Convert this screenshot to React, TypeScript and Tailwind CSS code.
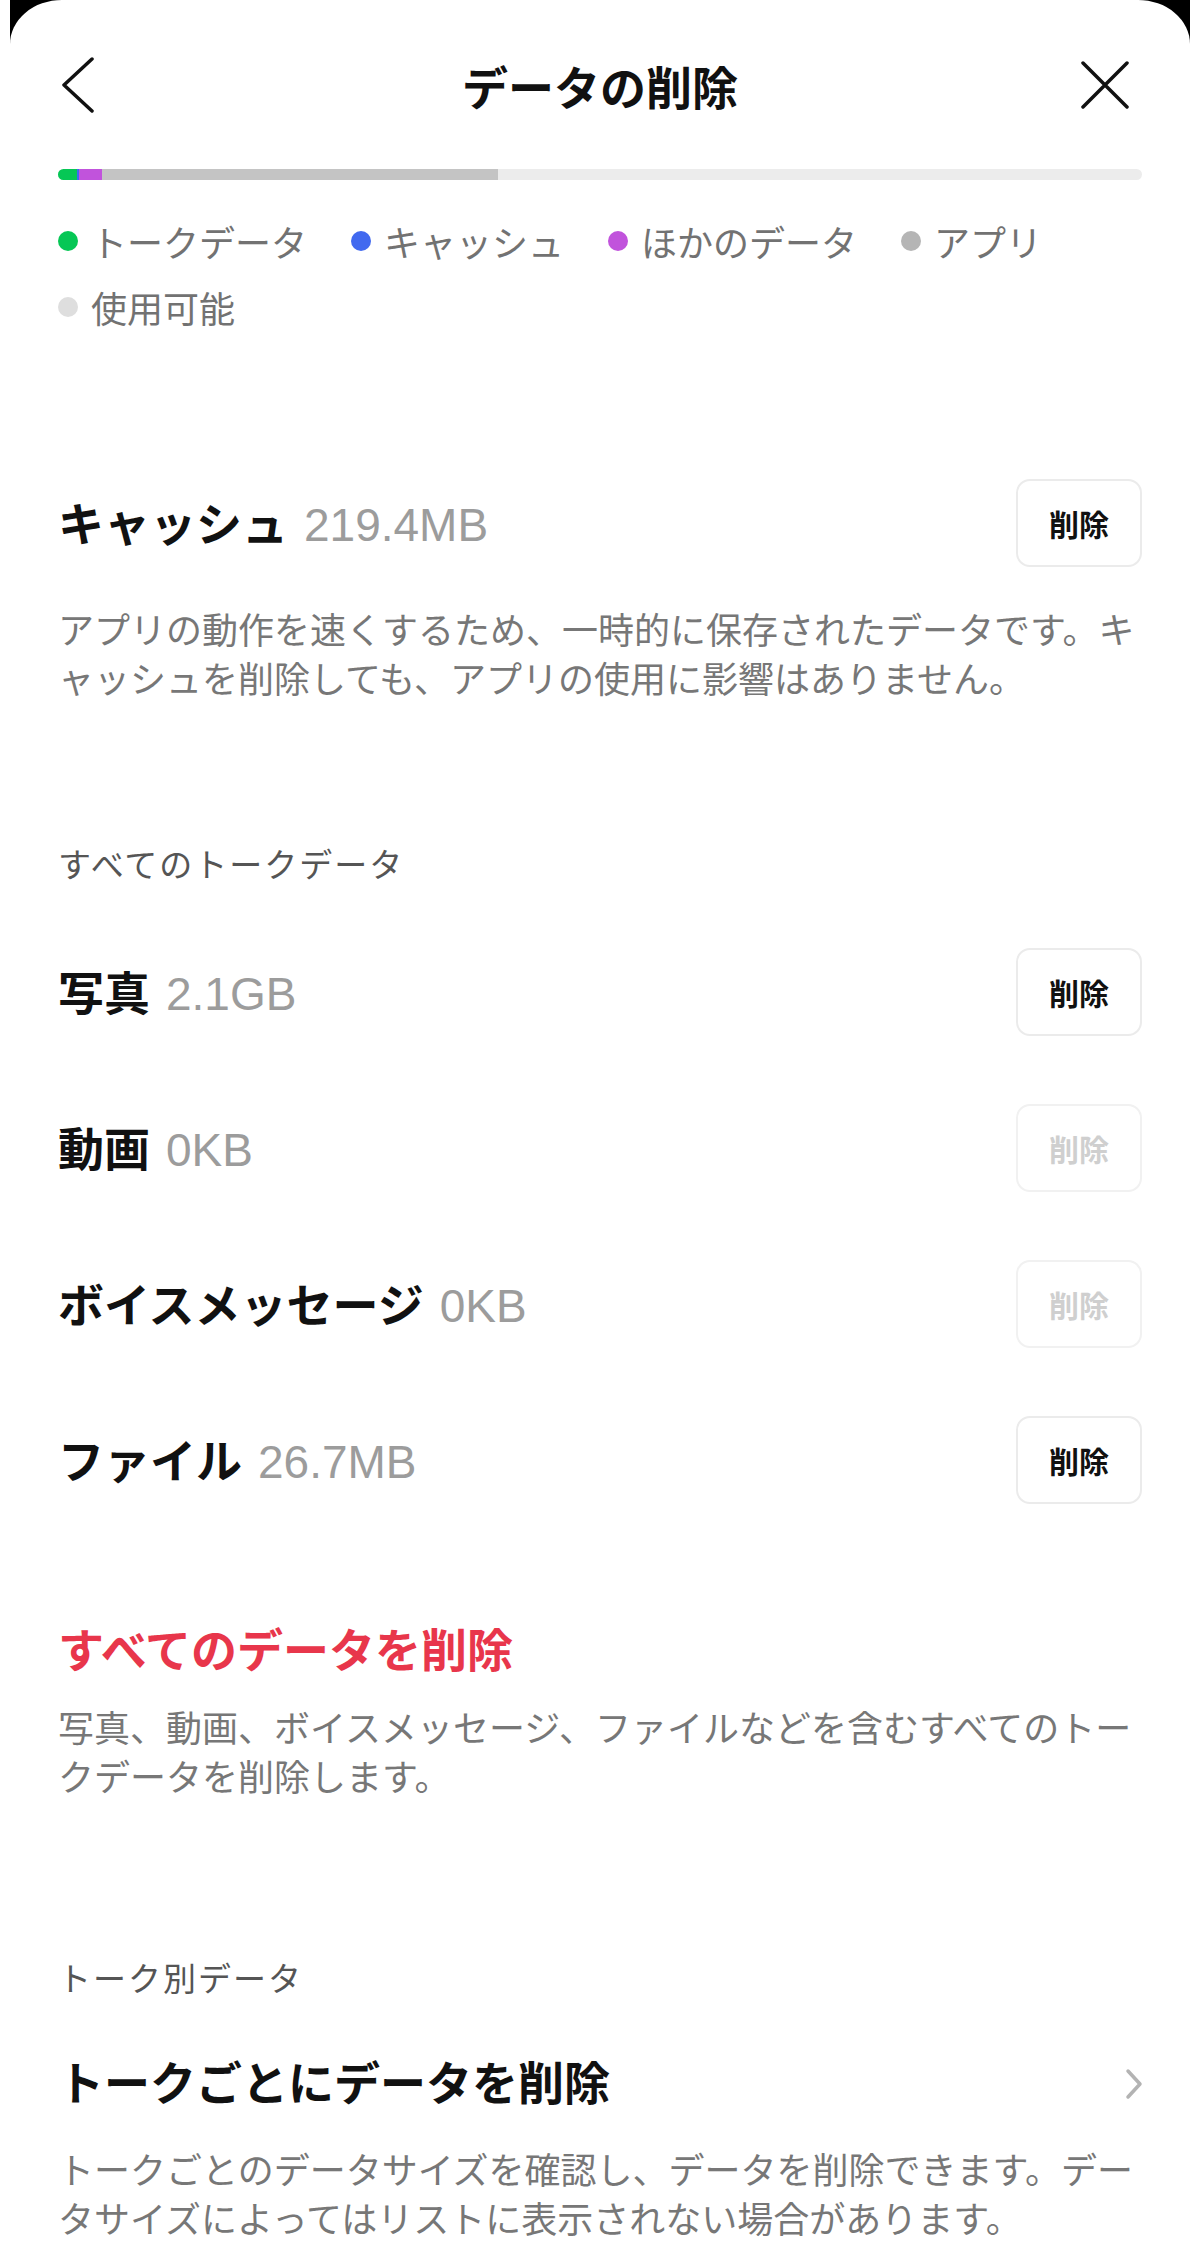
import React from "react";

type Row = { name: string; size: string; enabled: boolean };

const rows: Row[] = [
  { name: "写真", size: "2.1GB", enabled: true },
  { name: "動画", size: "0KB", enabled: false },
  { name: "ボイスメッセージ", size: "0KB", enabled: false },
  { name: "ファイル", size: "26.7MB", enabled: true },
];

const legend = [
  { label: "トークデータ", color: "bg-[#06c755]" },
  { label: "キャッシュ", color: "bg-[#4169ef]" },
  { label: "ほかのデータ", color: "bg-[#c153dc]" },
  { label: "アプリ", color: "bg-[#b5b5b5]" },
  { label: "使用可能", color: "bg-[#dedede]" },
];

const DeleteButton = ({ enabled }: { enabled: boolean }) => (
  <button
    className={`w-[126px] h-[88px] rounded-[14px] border-2 flex items-center justify-center text-[30px] font-bold ${
      enabled ? "border-[#ebebeb] text-[#111]" : "border-[#f1f1f1] text-[#cfcfcf]"
    }`}
  >
    削除
  </button>
);

const Heading = ({ name, size }: { name: string; size: string }) => (
  <div className="flex items-baseline">
    <span className="text-[46px] leading-[60px] font-bold text-[#111]">{name}</span>
    <span className="ml-[16px] text-[46px] leading-[60px] text-[#9c9c9c] font-['Liberation_Sans',sans-serif]">
      {size}
    </span>
  </div>
);

export default function App() {
  return (
    <div className="w-[1200px] min-h-[2264px] bg-white font-['Noto_Sans_CJK_JP','Noto_Sans',sans-serif]">
      <div className="mx-[10px] bg-black">
        <div className="bg-white rounded-tl-[52px_44px] rounded-tr-[52px_44px] px-[48px] pt-[40px] pb-[20px]">
          {/* header */}
          <div className="grid grid-cols-[1fr_auto_1fr] items-center h-[90px]">
            <svg width="40" height="56" viewBox="0 0 40 56" className="ml-[2px]">
              <path d="M32 2 L4 28 L32 54" fill="none" stroke="#111" strokeWidth="3.5" strokeLinecap="round" strokeLinejoin="round" />
            </svg>
            <h1 className="text-[46px] font-bold text-[#111] leading-[60px]">データの削除</h1>
            <div className="flex justify-end">
              <svg width="48" height="48" viewBox="0 0 48 48" className="mr-[13px]">
                <path d="M2 2 L46 46 M46 2 L2 46" fill="none" stroke="#111" strokeWidth="3.5" strokeLinecap="round" />
              </svg>
            </div>
          </div>

          {/* usage bar */}
          <div className="mt-[39px] h-[11px] rounded-full bg-[#ececec] flex overflow-hidden">
            <div className="w-[19px] bg-[#06c755]" />
            <div className="w-[2px] bg-[#4169ef]" />
            <div className="w-[23px] bg-[#c153dc]" />
            <div className="w-[396px] bg-[#c4c4c4]" />
          </div>

          {/* legend */}
          <div className="mt-[36px] flex flex-wrap gap-x-[44px] gap-y-[16px]">
            {legend.map((l) => (
              <div key={l.label} className="flex items-center">
                <span className={`w-[20px] h-[20px] rounded-full ${l.color}`} />
                <span className="ml-[13px] text-[36px] leading-[50px] text-[#727272]">{l.label}</span>
              </div>
            ))}
          </div>

          {/* cache */}
          <div className="mt-[147px] flex items-center justify-between">
            <Heading name="キャッシュ" size="219.4MB" />
            <DeleteButton enabled />
          </div>
          <p className="mt-[37px] text-[36px] leading-[49px] text-[#777] whitespace-nowrap">
            アプリの動作を速くするため、一時的に保存されたデータです。キ
            <br />
            ャッシュを削除しても、アプリの使用に影響はありません。
          </p>

          {/* all talk data */}
          <div className="mt-[139px] text-[33px] leading-[44px] tracking-[2px] text-[#555]">
            すべてのトークデータ
          </div>
          <div className="mt-[63px] flex flex-col gap-[68px]">
            {rows.map((r) => (
              <div key={r.name} className="flex items-center justify-between">
                <Heading name={r.name} size={r.size} />
                <DeleteButton enabled={r.enabled} />
              </div>
            ))}
          </div>

          <div className="mt-[113px] text-[46px] leading-[60px] font-bold text-[#e8364b]">
            すべてのデータを削除
          </div>
          <p className="mt-[25px] text-[36px] leading-[49px] text-[#777] whitespace-nowrap">
            写真、動画、ボイスメッセージ、ファイルなどを含むすべてのトー
            <br />
            クデータを削除します。
          </p>

          {/* per talk */}
          <div className="mt-[155px] text-[33px] leading-[44px] tracking-[2px] text-[#555]">
            トーク別データ
          </div>
          <div className="mt-[51px] flex items-center justify-between">
            <span className="text-[46px] leading-[60px] font-bold text-[#111]">
              トークごとにデータを削除
            </span>
            <svg width="20" height="32" viewBox="0 0 20 32" className="mt-[8px] mr-[-2px]">
              <path d="M4 3 L16 16 L4 29" fill="none" stroke="#b3b3b3" strokeWidth="3.5" strokeLinecap="round" strokeLinejoin="round" />
            </svg>
          </div>
          <p className="mt-[34px] text-[36px] leading-[49px] text-[#777] whitespace-nowrap">
            トークごとのデータサイズを確認し、データを削除できます。デー
            <br />
            タサイズによってはリストに表示されない場合があります。
          </p>
        </div>
      </div>
    </div>
  );
}
